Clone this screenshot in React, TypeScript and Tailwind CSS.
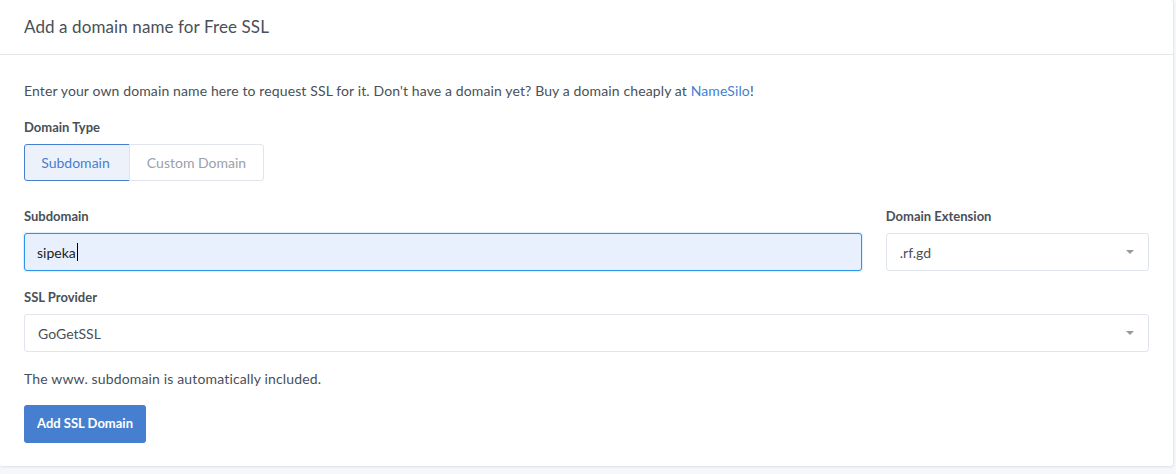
import { useState } from "react";

function SelectBox({ value }: { value: string }) {
  return (
    <div className="flex h-[38px] w-full items-center justify-between rounded-[3px] border border-[#e0e5ec] bg-white pl-[13px] pr-[13px] text-[14px] text-[#495057]">
      <span>{value}</span>
      <svg width="10" height="6" viewBox="0 0 10 6" className="text-[#999]">
        <path d="M1 1h8L5 5z" fill="currentColor" />
      </svg>
    </div>
  );
}

export default function App() {
  const [type, setType] = useState("sub");

  return (
    <div
      className="min-h-screen bg-[#f5f7fb] pr-[2px] text-[#495057]"
      style={{ fontFamily: "Lato, 'Open Sans', sans-serif" }}
    >
      <div className="rounded-b-[3px] rounded-tr-[3px] border-r border-b border-[#e3e7ee] bg-white shadow-[0_1px_2px_rgba(0,0,0,0.04)]">
        {/* header */}
        <div className="flex h-[55px] items-center border-b border-[#e6e6e6] px-6">
          <h3 className="text-[17px] tracking-[0.1px] text-[#495057]">Add a domain name for Free SSL</h3>
        </div>

        <div className="px-6 pt-[25px] pb-[23px]">
          <p className="text-[14px] leading-[22px] tracking-[0.12px]">
            Enter your own domain name here to request SSL for it. Don't have a domain yet? Buy a domain cheaply at{" "}
            <a className="text-[#467fcf]">NameSilo</a>!
          </p>

          <div className="mt-[16px]">
            <div className="text-[13px] font-bold leading-[18px]">Domain Type</div>
            <div className="mt-[8px] flex text-[14px]">
              <button
                onClick={() => setType("sub")}
                className={
                  type === "sub"
                    ? "h-[37px] w-[106px] rounded-l-[3px] border border-[#467fcf] bg-[#edf2fa] pr-[3px] text-[#467fcf]"
                    : "h-[37px] w-[106px] rounded-l-[3px] border border-[#e0e5ec] bg-white pr-[3px] text-[#9aa0ac]"
                }
              >
                Subdomain
              </button>
              <button
                onClick={() => setType("custom")}
                className={
                  type === "custom"
                    ? "h-[37px] w-[134px] rounded-r-[3px] border border-[#467fcf] bg-[#edf2fa] text-[#467fcf]"
                    : "-ml-px h-[37px] w-[135px] rounded-r-[3px] border border-[#e0e5ec] bg-white text-[#9aa0ac]"
                }
              >
                Custom Domain
              </button>
            </div>
          </div>

          <div className="mt-[26px] grid grid-cols-4 gap-x-6">
            <div className="col-span-3">
              <div className="text-[13px] font-bold leading-[18px]">Subdomain</div>
              <div className="mt-[8px] flex h-[38px] items-center rounded-[3px] border border-[#2d94ea] bg-[#e8f0fe] px-[12px] text-[14px] text-[#222] shadow-[0_0_0_1px_rgba(45,148,234,0.15)]">
                sipeka<span className="ml-px inline-block h-[18px] w-px bg-black" />
              </div>
            </div>
            <div>
              <div className="text-[13px] font-bold leading-[18px]">Domain Extension</div>
              <div className="mt-[8px]">
                <SelectBox value=".rf.gd" />
              </div>
            </div>
          </div>

          <div className="mt-[17px]">
            <div className="text-[13px] font-bold leading-[18px]">SSL Provider</div>
            <div className="mt-[8px]">
              <SelectBox value="GoGetSSL" />
            </div>
          </div>

          <p className="mt-[16px] text-[14px] leading-[22px] tracking-[0.15px]">The www. subdomain is automatically included.</p>

          <button className="mt-[15px] h-[38px] rounded-[3px] bg-[#467fcf] px-[13px] text-[13px] font-bold text-white">
            Add SSL Domain
          </button>
        </div>
      </div>
    </div>
  );
}
